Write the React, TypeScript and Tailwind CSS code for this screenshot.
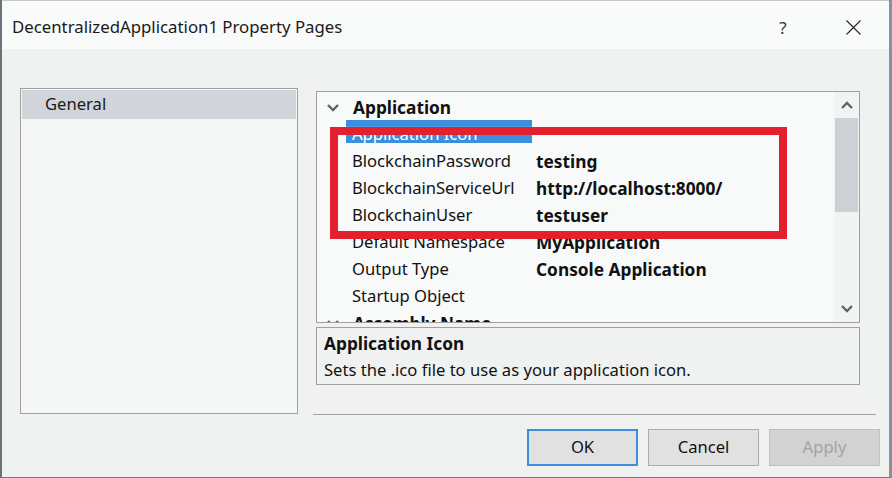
import React from "react";

const rows: { name: string; value?: string; header?: boolean; selected?: boolean }[] = [
  { name: "Application", header: true },
  { name: "Application Icon", selected: true },
  { name: "BlockchainPassword", value: "testing" },
  { name: "BlockchainServiceUrl", value: "http://localhost:8000/" },
  { name: "BlockchainUser", value: "testuser" },
  { name: "Default Namespace", value: "MyApplication" },
  { name: "Output Type", value: "Console Application" },
  { name: "Startup Object" },
  { name: "Assembly Name", header: true },
];

function Chevron({ up }: { up?: boolean }) {
  return (
    <svg width="12" height="8" viewBox="0 0 12 8">
      {up ? (
        <path d="M1 7 L6 2 L11 7" fill="none" stroke="#5a6673" strokeWidth="2.4" />
      ) : (
        <path d="M1 1 L6 6 L11 1" fill="none" stroke="#5a6673" strokeWidth="2.4" />
      )}
    </svg>
  );
}

export default function App() {
  return (
    <div className="relative w-[892px] h-[478px] bg-[#f0f1f1] border-l-[2px] border-l-[#6b747d] border-r-[3px] border-r-[#8a9099] border-b border-b-[#3f86d0] font-['Noto_Sans',sans-serif] text-[16.6px] text-[#111] overflow-hidden flex flex-col">
      {/* Title bar */}
      <div className="h-[49px] shrink-0 bg-[#f9fafa] border-t border-t-[#c8c8c8] flex items-center pl-[10px] pr-[28px] pt-[5px]">
        <div className="flex-1 text-[16.8px] text-[#1a1a1a] leading-none">DecentralizedApplication1 Property Pages</div>
        <div className="w-[14px] text-center text-[17px] text-[#333] mr-[56px] leading-none">?</div>
        <svg width="15" height="15" viewBox="0 0 15 15">
          <path d="M0.5 0.5 L14.5 14.5 M14.5 0.5 L0.5 14.5" stroke="#222" strokeWidth="1.1" />
        </svg>
      </div>

      {/* Body */}
      <div className="flex flex-row pt-[39px] pl-[18px]">
        {/* Left list */}
        <div className="w-[278px] h-[326px] border border-[#a0a0a0] bg-[#f5f6f6] p-px">
          <div className="h-[29px] bg-[#d1d4d8] flex items-center pl-[23px] text-[#1a1a1a]">General</div>
        </div>

        {/* Right column */}
        <div className="ml-[18px] w-[544px] flex flex-col">
          {/* Property grid */}
          <div className="mt-[3px] h-[232px] border border-[#a0a0a0] flex flex-row">
            <div className="flex-1 bg-[#f8f9f9] overflow-hidden pt-[2px]">
              {rows.map((r, i) =>
                r.header ? (
                  <div key={i} className="h-[27px] flex items-center">
                    <div className="w-[29px] flex justify-center pl-[3px]">
                      <Chevron />
                    </div>
                    <div className="pl-[7px] font-bold text-[17.3px]">{r.name}</div>
                  </div>
                ) : (
                  <div key={i} className="h-[27px] flex items-center">
                    <div className="w-[29px]" />
                    {r.selected ? (
                      <div className="w-[186px] h-[23px] self-start -mt-px bg-[#3b8fdd] relative pl-[6px] text-white overflow-hidden flex items-center">
                        <div className="absolute left-0 right-0 top-[6px] border-t border-dotted border-[#8a9bb0]" />
                        <span className="relative top-[3px] whitespace-nowrap">{r.name}</span>
                      </div>
                    ) : (
                      <>
                        <div className="w-[185px] pl-[6px] whitespace-nowrap">{r.name}</div>
                        <div className="pl-[5px] font-bold text-[17.3px] whitespace-nowrap">{r.value}</div>
                      </>
                    )}
                  </div>
                )
              )}
            </div>
            <div className="w-[25px] bg-[#f2f3f3] flex flex-col">
              <div className="h-[26px] flex items-center justify-center">
                <Chevron up />
              </div>
              <div className="h-[94px] mx-px bg-[#cdd0d4]" />
              <div className="flex-1" />
              <div className="h-[26px] flex items-center justify-center">
                <Chevron />
              </div>
            </div>
          </div>

          {/* Description */}
          <div className="mt-[4px] h-[58px] border border-[#a0a0a0] bg-[#f0f1f1] pl-[7px] pt-[3px] leading-[26px]">
            <div className="font-bold text-[17.3px]">Application Icon</div>
            <div className="whitespace-nowrap">Sets the .ico file to use as your application icon.</div>
          </div>

          {/* Separator */}
          <div className="mt-[29px] -ml-[3px] w-[563px] h-px bg-[#a0a0a0]" />

          {/* Buttons */}
          <div className="mt-[14px] w-[564px] flex justify-end gap-[10px]">
            <div className="w-[111px] h-[37px] bg-[#e1e1e1] border-2 border-[#3d8ee0] flex items-center justify-center text-[#111]">OK</div>
            <div className="w-[111px] h-[37px] bg-[#e1e1e1] border border-[#adadad] flex items-center justify-center text-[#111]">Cancel</div>
            <div className="w-[111px] h-[37px] bg-[#d2d2d2] border border-[#c0c0c0] flex items-center justify-center text-[#a3a3a3]">Apply</div>
          </div>
        </div>
      </div>

      {/* Red annotation rectangle */}
      <div className="absolute left-[328px] top-[127px] w-[457px] h-[112px] border-[8px] border-[#e3202d]" />
    </div>
  );
}
